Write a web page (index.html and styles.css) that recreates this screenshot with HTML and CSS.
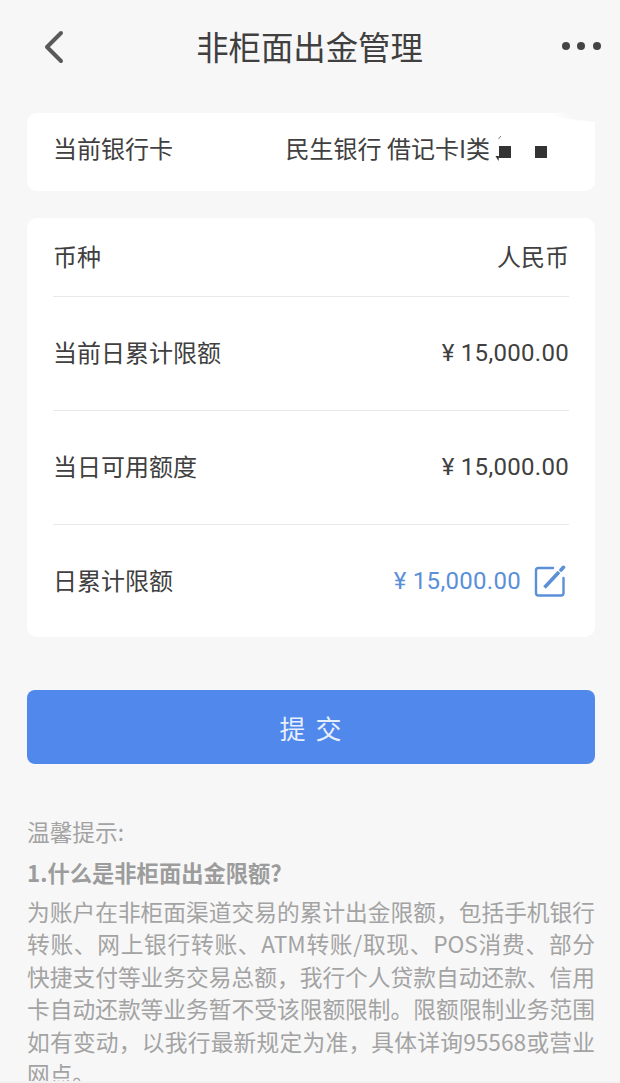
FILE: index.html
```html
<!DOCTYPE html>
<html lang="zh-CN">
<head>
    <meta charset="UTF-8">
    <meta name="viewport" content="width=device-width, initial-scale=1.0">
    <title>非柜面出金管理</title>
    <link rel="stylesheet" href="styles.css">
</head>
<body>
    <div class="page">
        <div class="header">
            <svg class="back-icon" width="24" height="36" viewBox="0 0 24 36">
                <path d="M20 4 L6 18 L20 32" fill="none" stroke="#5a5a5a" stroke-width="4" stroke-linecap="round" stroke-linejoin="round"/>
            </svg>
            <h1>非柜面出金管理</h1>
            <div class="more"><span></span><span></span><span></span></div>
        </div>

        <div class="card card-bank">
            <div class="row row-bank">
                <span>当前银行卡</span>
                <span class="bank-name">民生银行 借记卡I类<i class="mask first"></i><i class="mask"></i>
                    <svg class="mask-ticks" width="10" height="30" viewBox="0 0 10 30">
                        <path d="M6 2 L3.500 5" stroke="#777" stroke-width="1" fill="none"/>
                        <path d="M0.500 22 H4 L3.500 27 Z" fill="#333"/>
                    </svg>
                </span>
            </div>
            <div class="card-notch"></div>
        </div>

        <div class="card card-limits">
            <div class="row row-first">
                <span>币种</span>
                <span>人民币</span>
            </div>
            <div class="row">
                <span>当前日累计限额</span>
                <span class="amount">¥ 15,000.00</span>
            </div>
            <div class="row">
                <span>当日可用额度</span>
                <span class="amount">¥ 15,000.00</span>
            </div>
            <div class="row">
                <span>日累计限额</span>
                <span class="edit-value">
                    <span class="amount blue">¥ 15,000.00</span>
                    <svg class="edit-icon" width="32" height="32" viewBox="0 0 32 32">
                        <path d="M19 3 H4.500 Q2 3 2 5.500 V28 Q2 30.500 4.500 30.500 H27 Q29.500 30.500 29.500 28 V13" fill="none" stroke="#5b8fd8" stroke-width="2.400" stroke-linecap="round"/>
                        <path d="M10.500 22.500 L25 7" fill="none" stroke="#5b8fd8" stroke-width="3.600"/>
                        <path d="M27 5 L29.500 2.300" fill="none" stroke="#5b8fd8" stroke-width="3.600" stroke-linecap="round"/>
                    </svg>
                </span>
            </div>
        </div>

        <button class="submit-btn">提 交</button>

        <div class="tips">
            <p class="tips-title">温馨提示:</p>
            <h3>1.什么是非柜面出金限额?</h3>
            <p class="tips-body">为账户在非柜面渠道交易的累计出金限额，包括手机银行转账、网上银行转账、ATM转账/取现、POS消费、部分快捷支付等业务交易总额，我行个人贷款自动还款、信用卡自动还款等业务暂不受该限额限制。限额限制业务范围如有变动，以我行最新规定为准，具体详询95568或营业网点。</p>
        </div>
    </div>
</body>
</html>
```

FILE: styles.css
```css
body {
    margin: 0;
    background: #f1f1f1;
    font-family: "Noto Sans CJK SC", "Liberation Sans", sans-serif;
    color: #404040;
}

.page {
    height: 1081px;
    overflow: hidden;
    padding: 0 25px 0 27px;
    background: #f7f7f7;
}

.header {
    height: 113px;
    display: flex;
    align-items: flex-start;
    justify-content: space-between;
    padding: 0 0 0 14px;
}

.back-icon {
    margin-top: 29px;
}

.header h1 {
    margin: 21px 0 0 -8px;
    font-size: 32.400px;
    line-height: 50px;
    font-weight: 400;
    color: #404040;
}

.more {
    display: flex;
    gap: 7.500px;
    margin: 42px -6px 0 0;
}

.more span {
    width: 8px;
    height: 8px;
    border-radius: 50%;
    background: #444;
}

.card {
    background: #fff;
    border-radius: 10px;
    padding: 0 26px;
}

.card-bank {
    position: relative;
    height: 78px;
    margin-bottom: 27px;
}

/* the top right corner is cut away in the picture */
.card-notch {
    position: absolute;
    top: 0;
    right: 0;
    width: 50px;
    height: 9px;
    background: linear-gradient(to left, #f7f7f7 40%, rgba(247, 247, 247, 0));
    clip-path: polygon(0 0, 100% 0, 100% 100%, 40% 60%);
}

.row {
    height: 114px;
    display: flex;
    align-items: center;
    justify-content: space-between;
    border-top: 1px solid #e8e8e8;
    box-sizing: border-box;
    font-size: 24px;
    padding-bottom: 5px;
}

.row-first {
    height: 78px;
    border-top: none;
    padding-bottom: 3px;
}

.row-bank {
    height: 72px;
    border-top: none;
    padding-bottom: 4px;
}

.bank-name {
    display: flex;
    align-items: center;
    margin-right: 21px;
    position: relative;
    left: -1px;
}

.mask {
    display: block;
    width: 12px;
    height: 12px;
    margin: 10px 0 0 24px;
    background: #333;
}

.mask.first {
    margin-left: 9px;
}

.mask-ticks {
    position: absolute;
    left: 209px;
    top: 4px;
}

.amount {
    font-family: "Roboto", "Noto Sans CJK SC", sans-serif;
    font-size: 24px;
    letter-spacing: 0.300px;
    margin-top: 4px;
}

.blue {
    color: #5b8fd8;
}

.edit-value {
    display: flex;
    align-items: center;
    gap: 13px;
    margin-right: 3px;
}

.edit-icon {
    margin-top: 3px;
}

.card-limits {
    height: 419px;
}

.submit-btn {
    display: block;
    width: 100%;
    height: 74px;
    margin-top: 53px;
    padding-left: 7px;
    border: none;
    border-radius: 8px;
    background: #5088ec;
    color: #e8effc;
    font-family: inherit;
    font-size: 26px;
    letter-spacing: 2px;
}

.tips {
    margin-top: 49px;
    color: #a3a3a3;
    font-size: 22.700px;
    line-height: 32.400px;
}

.tips-title {
    margin: 0;
    line-height: 38px;
}

.tips h3 {
    margin: 1px 0 4px;
    font-size: 22.300px;
    line-height: 40px;
    font-weight: 700;
    color: #9c9c9c;
}

.tips-body {
    margin: 0;
    text-align: justify;
}
```
